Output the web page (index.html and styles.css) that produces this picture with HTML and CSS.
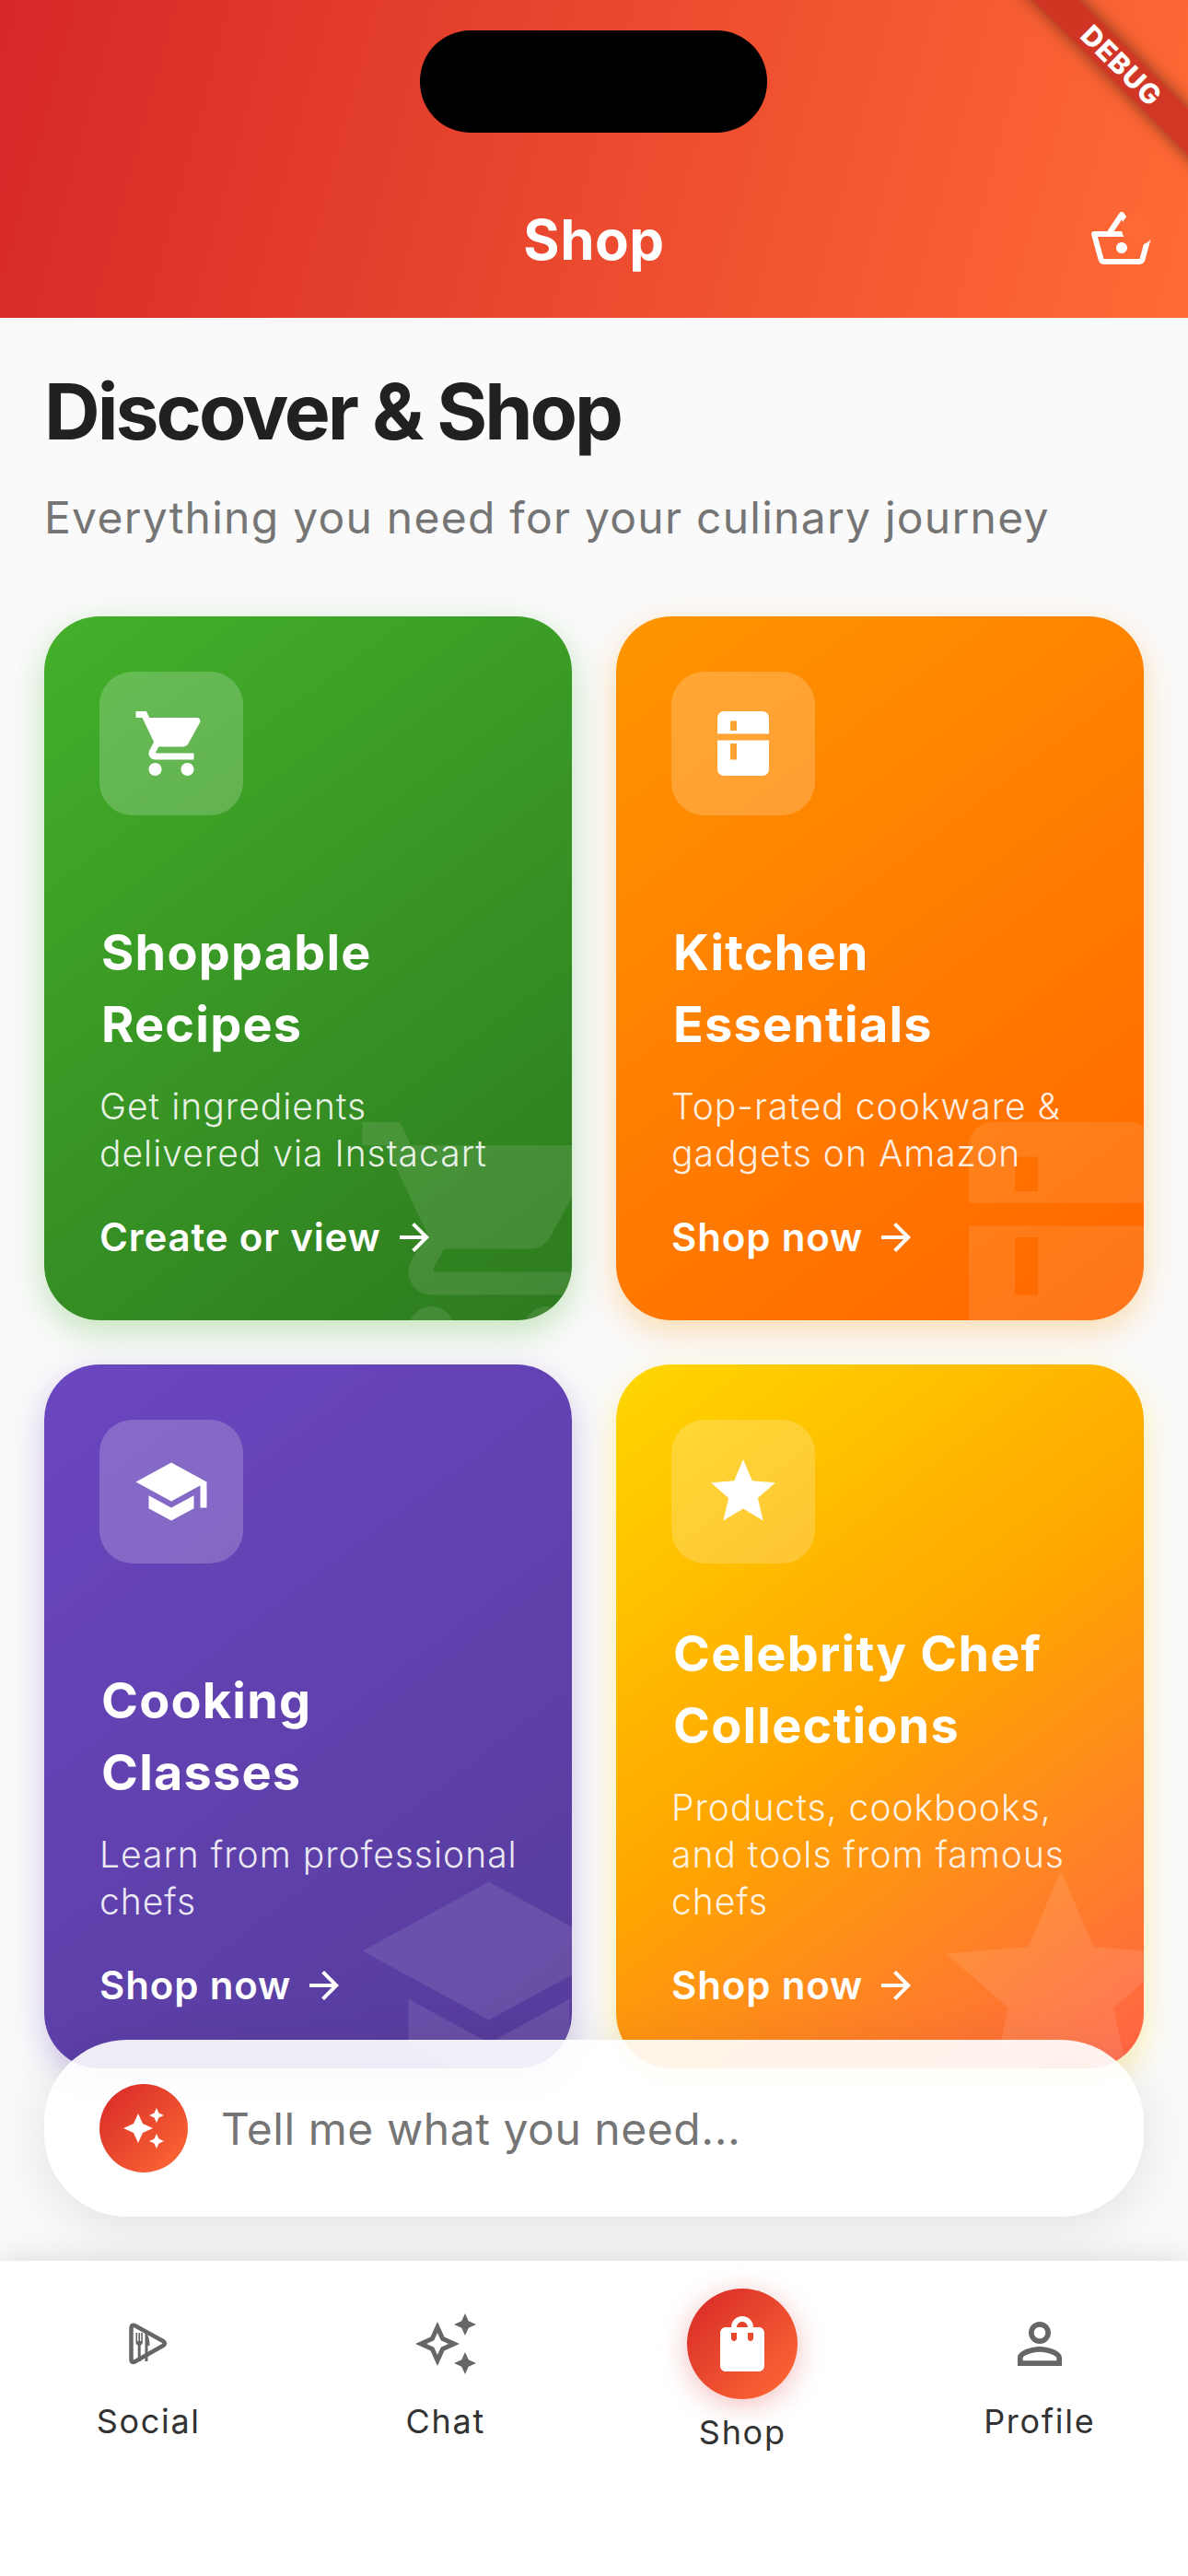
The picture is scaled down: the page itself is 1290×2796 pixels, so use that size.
FILE: index.html
```html
<!DOCTYPE html>
<html lang="en">
  <head>
    <meta charset="UTF-8" />
    <title>Shop</title>
    <link rel="stylesheet" href="styles.css">
  </head>
  <body>
    <svg class="iconDefs" aria-hidden="true">
      <symbol id="cart" viewBox="0 0 24 24"><path d="M7 18c-1.1 0-1.99.9-1.99 2S5.9 22 7 22s2-.9 2-2-.9-2-2-2zM1 2v2h2l3.6 7.59-1.35 2.45c-.16.28-.25.61-.25.96 0 1.1.9 2 2 2h12v-2H7.42c-.14 0-.25-.11-.25-.25l.03-.12.9-1.63h7.45c.75 0 1.41-.41 1.75-1.03l3.58-6.49c.08-.14.12-.31.12-.48 0-.55-.45-1-1-1H5.21l-.94-2H1zm16 16c-1.1 0-1.99.9-1.99 2s.89 2 1.99 2 2-.9 2-2-.9-2-2-2z"/></symbol>
      <symbol id="fridge" viewBox="0 0 24 24"><path fill-rule="evenodd" d="M6 2h12a2 2 0 0 1 2 2v5H4V4a2 2 0 0 1 2-2zM8 5v3h2V5zM4 11h16v9a2 2 0 0 1-2 2H6a2 2 0 0 1-2-2zM8 12v5h2v-5z"/></symbol>
      <symbol id="school" viewBox="0 0 24 24"><path d="M5 13.18v4L12 21l7-3.82v-4L12 17l-7-3.82zM12 3L1 9l11 6 9-4.91V17h2V9L12 3z"/></symbol>
      <symbol id="star" viewBox="0 0 24 24"><path d="M12 17.27L18.18 21l-1.64-7.03L22 9.24l-7.19-.61L12 2 9.19 8.63 2 9.24l5.46 4.73L5.82 21z"/></symbol>
      <symbol id="arrow" viewBox="0 0 24 24"><path d="M12 4l-1.41 1.41L16.17 11H4v2h12.17l-5.58 5.59L12 20l8-8z"/></symbol>
    </svg>

    <div class="app">
      <header class="topBar">
        <div class="notch"></div>
        <h1 class="topTitle">Shop</h1>
        <div class="basket">
          <svg viewBox="0 0 24 24"><path d="M22 9h-4.79l-4.38-6.56c-.19-.28-.51-.42-.83-.42s-.64.14-.83.43L6.79 9H2c-.55 0-1 .45-1 1 0 .09.01.18.04.27l2.54 9.27c.23.84 1 1.46 1.92 1.46h13c.92 0 1.69-.62 1.93-1.46l2.54-9.27L23 10c0-.55-.45-1-1-1zM12 4.8L14.8 9H9.2L12 4.8zM18.5 19l-12.99.01L3.31 11H20.7l-2.2 8zM12 13c-1.1 0-2 .9-2 2s.9 2 2 2 2-.9 2-2-.9-2-2-2z"/></svg>
          <span class="basketBadge"></span>
        </div>
        <div class="debugBanner">DEBUG</div>
      </header>

      <main class="content">
        <h2 class="pageTitle">Discover &amp; Shop</h2>
        <p class="pageSub">Everything you need for your culinary journey</p>

        <div class="cardGrid">
          <article class="card cardGreen">
            <svg class="watermark"><use href="#cart"/></svg>
            <div class="iconBox"><svg><use href="#cart"/></svg></div>
            <div class="cardText">
              <h3>Shoppable<br>Recipes</h3>
              <p>Get ingredients<br>delivered via Instacart</p>
              <div class="cardLink">Create or view <svg><use href="#arrow"/></svg></div>
            </div>
          </article>

          <article class="card cardOrange">
            <svg class="watermark"><use href="#fridge"/></svg>
            <div class="iconBox"><svg><use href="#fridge"/></svg></div>
            <div class="cardText">
              <h3>Kitchen<br>Essentials</h3>
              <p>Top-rated cookware &amp;<br>gadgets on Amazon</p>
              <div class="cardLink">Shop now <svg><use href="#arrow"/></svg></div>
            </div>
          </article>

          <article class="card cardPurple">
            <svg class="watermark"><use href="#school"/></svg>
            <div class="iconBox"><svg><use href="#school"/></svg></div>
            <div class="cardText">
              <h3>Cooking<br>Classes</h3>
              <p>Learn from professional<br>chefs</p>
              <div class="cardLink">Shop now <svg><use href="#arrow"/></svg></div>
            </div>
          </article>

          <article class="card cardGold">
            <svg class="watermark"><use href="#star"/></svg>
            <div class="iconBox"><svg><use href="#star"/></svg></div>
            <div class="cardText">
              <h3>Celebrity Chef<br>Collections</h3>
              <p>Products, cookbooks,<br>and tools from famous<br>chefs</p>
              <div class="cardLink">Shop now <svg><use href="#arrow"/></svg></div>
            </div>
          </article>
        </div>

        <div class="askBar">
          <span class="askIcon">
            <svg viewBox="0 0 24 24"><path d="M19 9l1.25-2.75L23 5l-2.75-1.25L19 1l-1.25 2.75L15 5l2.75 1.25zm-7.5.5L9 4 6.5 9.5 1 12l5.5 2.5L9 20l2.5-5.5L17 12l-5.5-2.5zM19 15l-1.25 2.75L15 19l2.75 1.25L19 23l1.25-2.75L23 19l-2.75-1.25z"/></svg>
          </span>
          <span class="askText">Tell me what you need...</span>
        </div>
      </main>

      <nav class="bottomNav">
        <div class="navItem">
          <div class="navIcon">
            <svg viewBox="0 0 72 72">
              <path class="socialPlay" d="M17.5 19Q17.500 14 22 16.500L52 33Q56 35.500 52 38L22 55Q17.500 57.500 17.500 53z"/>
              <path d="M22.500 24h1.600v9h1.300v-9H27v9h1.300v-9h1.600v10.500c0 1.600-1 2.600-2.200 3V55h-3V37.500c-1.200-.4-2.200-1.400-2.200-3zM32.500 24c3 1 5 6 5 14h-2v17h-3z"/>
            </svg>
          </div>
          <span>Social</span>
        </div>
        <div class="navItem">
          <div class="navIcon">
            <svg viewBox="0 0 24 24"><path d="M19 9l1.25-2.75L23 5l-2.75-1.25L19 1l-1.25 2.75L15 5l2.75 1.25L19 9zm-7.5.5L9 4 6.5 9.5 1 12l5.5 2.5L9 20l2.5-5.5L17 12l-5.5-2.5zM9 15.99L7.74 13.26 5.01 12l2.73-1.26L9 8.01l1.26 2.73L12.99 12l-2.73 1.26L9 15.99zM19 15l-1.25 2.75L15 19l2.75 1.25L19 23l1.25-2.75L23 19l-2.75-1.25L19 15z"/></svg>
          </div>
          <span>Chat</span>
        </div>
        <div class="navItem navActive">
          <div class="navIcon">
            <svg viewBox="0 0 24 24"><path d="M18 6h-2c0-2.21-1.79-4-4-4S8 3.79 8 6H6c-1.1 0-2 .9-2 2v12c0 1.1.9 2 2 2h12c1.1 0 2-.9 2-2V8c0-1.1-.9-2-2-2zm-8 4c0 .55-.45 1-1 1s-1-.45-1-1V8h2v2zm2-6c1.1 0 2 .9 2 2h-4c0-1.1.9-2 2-2zm4 6c0 .55-.45 1-1 1s-1-.45-1-1V8h2v2z"/></svg>
          </div>
          <span>Shop</span>
        </div>
        <div class="navItem">
          <div class="navIcon">
            <svg viewBox="0 0 24 24"><path d="M12 5.9c1.16 0 2.1.94 2.1 2.1s-.94 2.1-2.1 2.1S9.9 9.16 9.9 8s.94-2.1 2.1-2.1m0 9c2.97 0 6.1 1.46 6.1 2.1v1.1H5.9V17c0-.64 3.13-2.1 6.1-2.1M12 4C9.79 4 8 5.79 8 8s1.79 4 4 4 4-1.79 4-4-1.79-4-4-4zm0 9c-2.67 0-8 1.34-8 4v3h16v-3c0-2.66-5.33-4-8-4z"/></svg>
          </div>
          <span>Profile</span>
        </div>
      </nav>
    </div>
  </body>
</html>
```

FILE: styles.css
```css
body {
  margin: 0;
  font-family: Inter, "Liberation Sans", sans-serif;
  background: #fafafa;
}

.iconDefs {
  position: absolute;
  width: 0;
  height: 0;
}

.app {
  width: 1290px;
  height: 2796px;
  display: flex;
  flex-direction: column;
  overflow: hidden;
}

/* top bar */
.topBar {
  position: relative;
  flex: none;
  height: 345px;
  box-sizing: border-box;
  padding-top: 221px;
  background: linear-gradient(105deg, #d62828, #ff6b35);
  overflow: hidden;
}

.notch {
  position: absolute;
  top: 33px;
  left: 456px;
  width: 377px;
  height: 111px;
  border-radius: 55px;
  background: #000;
}

.topTitle {
  margin: 0;
  font-size: 60px;
  line-height: 78px;
  font-weight: 700;
  letter-spacing: 0.5px;
  color: #fff;
  text-align: center;
}

.basket {
  position: absolute;
  top: 224px;
  right: 36px;
  width: 72px;
  height: 72px;
}

.basket svg {
  display: block;
  width: 72px;
  height: 72px;
  fill: #fff;
}

.basketBadge {
  position: absolute;
  top: 6px;
  right: 0;
  width: 36px;
  height: 36px;
  border-radius: 50%;
  background: #fe6a35;
}

.debugBanner {
  position: absolute;
  top: 53px;
  left: 1018px;
  width: 400px;
  height: 36px;
  line-height: 36px;
  text-align: center;
  font-size: 30px;
  font-weight: 800;
  letter-spacing: 1px;
  color: #fff;
  background: rgba(183, 28, 28, 0.63);
  box-shadow: 0 0 18px rgba(0, 0, 0, 0.5);
  transform: rotate(45deg);
}

/* content */
.content {
  position: relative;
  flex: 1;
  padding: 54px 48px 0;
  min-height: 0;
}

.pageTitle {
  margin: 0;
  font-size: 84px;
  line-height: 96px;
  font-weight: 700;
  letter-spacing: -3px;
  color: #212121;
}

.pageSub {
  margin: 37px 0 77px;
  font-size: 48px;
  line-height: 60px;
  letter-spacing: 1.25px;
  color: #757575;
}

.cardGrid {
  display: grid;
  grid-template-columns: 573px 573px;
  grid-auto-rows: 764px;
  gap: 48px;
}

.card {
  position: relative;
  display: flex;
  flex-direction: column;
  justify-content: space-between;
  box-sizing: border-box;
  padding: 60px;
  border-radius: 60px;
  color: #fff;
  overflow: hidden;
}

.cardGreen {
  background: linear-gradient(143deg, #43b02a, #2d7a1f);
  box-shadow: 0 12px 36px rgba(67, 176, 42, 0.3);
}

.cardOrange {
  background: linear-gradient(143deg, #ff9500, #ff6600);
  box-shadow: 0 12px 36px rgba(255, 149, 0, 0.3);
}

.cardPurple {
  background: linear-gradient(143deg, #6b46c1, #553c9a);
  box-shadow: 0 12px 36px rgba(107, 70, 193, 0.3);
}

.cardGold {
  background: linear-gradient(143deg, #ffd700, #ffa500 50%, #ff6347);
  box-shadow: 0 12px 36px rgba(255, 215, 0, 0.3);
}

.watermark {
  position: absolute;
  right: -60px;
  bottom: -60px;
  width: 300px;
  height: 300px;
  fill: rgba(255, 255, 255, 0.1);
}

.iconBox {
  position: relative;
  width: 156px;
  height: 156px;
  display: flex;
  align-items: center;
  justify-content: center;
  border-radius: 36px;
  background: rgba(255, 255, 255, 0.2);
}

.iconBox svg {
  width: 84px;
  height: 84px;
  fill: #fff;
}

.cardText {
  position: relative;
}

.cardText h3 {
  margin: 0;
  padding-left: 2px;
  font-size: 54px;
  line-height: 78px;
  font-weight: 700;
  letter-spacing: 1.2px;
}

.cardText p {
  margin: 24px 0 0;
  font-size: 39px;
  line-height: 51px;
  font-weight: 300;
  letter-spacing: 1px;
  white-space: nowrap;
  color: rgba(255, 255, 255, 0.9);
}

.cardLink {
  display: flex;
  align-items: center;
  gap: 12px;
  margin-top: 36px;
  font-size: 42px;
  line-height: 60px;
  font-weight: 600;
  letter-spacing: 0.85px;
}

.cardLink svg {
  width: 48px;
  height: 48px;
  fill: #fff;
}

/* floating ask bar */
.askBar {
  position: absolute;
  left: 48px;
  right: 48px;
  bottom: 48px;
  height: 192px;
  display: flex;
  align-items: center;
  gap: 36px;
  box-sizing: border-box;
  padding-left: 60px;
  border-radius: 90px;
  background: rgba(255, 255, 255, 0.9);
  box-shadow: 0 12px 60px rgba(0, 0, 0, 0.1);
}

.askIcon {
  width: 96px;
  height: 96px;
  display: flex;
  align-items: center;
  justify-content: center;
  border-radius: 50%;
  background: linear-gradient(135deg, #d62828, #ff6b35);
}

.askIcon svg {
  width: 48px;
  height: 48px;
  fill: #fff;
}

.askText {
  font-size: 48px;
  letter-spacing: 0.55px;
  color: #757575;
}

/* bottom nav */
.bottomNav {
  position: relative;
  flex: none;
  height: 342px;
  display: grid;
  grid-template-columns: repeat(4, 1fr);
  box-sizing: border-box;
  padding-top: 30px;
  background: #fff;
  box-shadow: 0 -6px 30px rgba(0, 0, 0, 0.1);
}

.navItem {
  display: flex;
  flex-direction: column;
  align-items: center;
  font-size: 36px;
  line-height: 48px;
  letter-spacing: 1.7px;
  color: #333;
}

.navIcon {
  margin: 24px 0;
  width: 72px;
  height: 72px;
  display: flex;
  align-items: center;
  justify-content: center;
}

.navIcon svg {
  width: 72px;
  height: 72px;
  fill: #666;
}

.socialPlay {
  fill: none;
  stroke: #666;
  stroke-width: 4.5;
  stroke-linejoin: round;
}

.navActive .navIcon {
  margin: 0 0 12px;
  width: 120px;
  height: 120px;
  border-radius: 50%;
  background: linear-gradient(135deg, #d62828, #ff6b35);
  box-shadow: 0 6px 30px rgba(214, 40, 40, 0.3);
}

.navActive .navIcon svg {
  fill: #fff;
}
```
